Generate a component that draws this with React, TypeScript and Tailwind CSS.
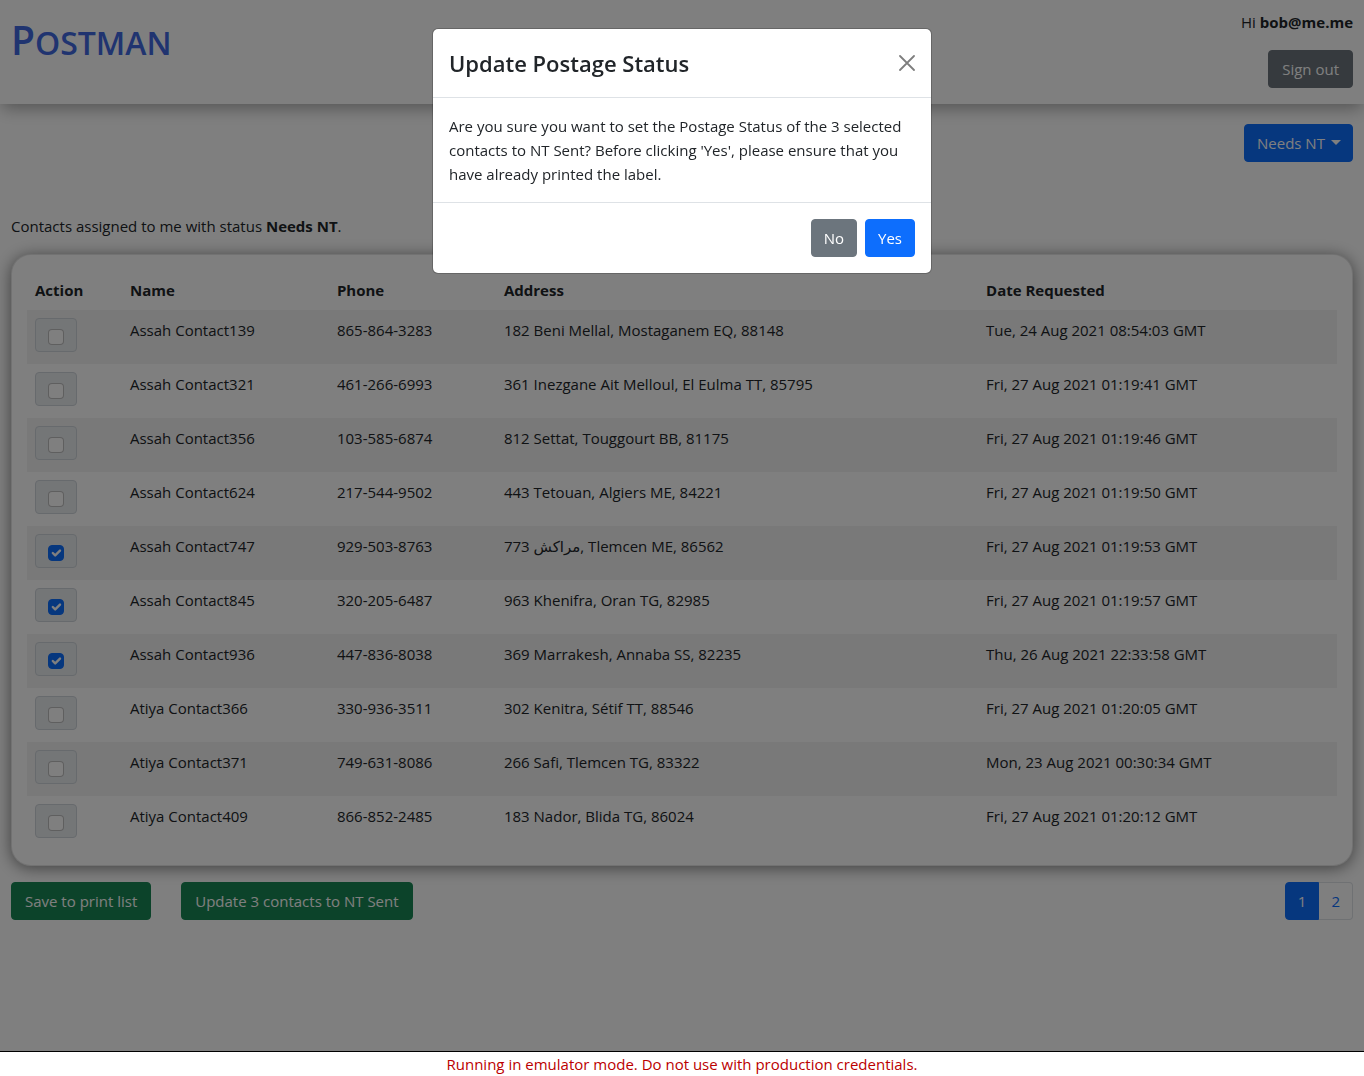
import { useState } from 'react';

type Contact = {
  name: string;
  phone: string;
  address: string;
  requested: string;
  selected?: boolean;
};

const initialContacts: Contact[] = [
  { name: 'Assah Contact139', phone: '865-864-3283', address: '182 Beni Mellal, Mostaganem EQ, 88148', requested: 'Tue, 24 Aug 2021 08:54:03 GMT' },
  { name: 'Assah Contact321', phone: '461-266-6993', address: '361 Inezgane Ait Melloul, El Eulma TT, 85795', requested: 'Fri, 27 Aug 2021 01:19:41 GMT' },
  { name: 'Assah Contact356', phone: '103-585-6874', address: '812 Settat, Touggourt BB, 81175', requested: 'Fri, 27 Aug 2021 01:19:46 GMT' },
  { name: 'Assah Contact624', phone: '217-544-9502', address: '443 Tetouan, Algiers ME, 84221', requested: 'Fri, 27 Aug 2021 01:19:50 GMT' },
  { name: 'Assah Contact747', phone: '929-503-8763', address: '773 مراكش, Tlemcen ME, 86562', requested: 'Fri, 27 Aug 2021 01:19:53 GMT', selected: true },
  { name: 'Assah Contact845', phone: '320-205-6487', address: '963 Khenifra, Oran TG, 82985', requested: 'Fri, 27 Aug 2021 01:19:57 GMT', selected: true },
  { name: 'Assah Contact936', phone: '447-836-8038', address: '369 Marrakesh, Annaba SS, 82235', requested: 'Thu, 26 Aug 2021 22:33:58 GMT', selected: true },
  { name: 'Atiya Contact366', phone: '330-936-3511', address: '302 Kenitra, Sétif TT, 88546', requested: 'Fri, 27 Aug 2021 01:20:05 GMT' },
  { name: 'Atiya Contact371', phone: '749-631-8086', address: '266 Safi, Tlemcen TG, 83322', requested: 'Mon, 23 Aug 2021 00:30:34 GMT' },
  { name: 'Atiya Contact409', phone: '866-852-2485', address: '183 Nador, Blida TG, 86024', requested: 'Fri, 27 Aug 2021 01:20:12 GMT' },
];

function Header() {
  return (
    <header className="flex items-start justify-between bg-white px-[11px] pt-2.5 pb-4 shadow-[0_6px_16px_-2px_rgba(0,0,0,0.35)]">
      <h1 className="pt-1.5 text-[39px] leading-[48px] font-semibold text-[#4169e1]">
        P<span className="text-[32px] uppercase">ostman</span>
      </h1>
      <div className="flex flex-col items-end gap-4">
        <p>
          Hi <strong className="font-bold">bob@me.me</strong>
        </p>
        <button type="button" className="rounded border border-[#6c757d] bg-[#6c757d] px-[13px] py-1.5 text-white">
          Sign out
        </button>
      </div>
    </header>
  );
}

function StatusFilter() {
  return (
    <div className="relative">
      <select
        aria-label="Status"
        className="h-[38px] w-[109px] appearance-none rounded border border-[#0d6efd] bg-[#0d6efd] pl-3 text-white"
      >
        <option>Needs NT</option>
      </select>
      <svg aria-hidden="true" viewBox="0 0 10 5" className="pointer-events-none absolute top-4 right-3 h-[5px] w-[10px] fill-white">
        <path d="M0 0H10L5 5Z" />
      </svg>
    </div>
  );
}

function ContactRow({ contact }: { contact: Contact }) {
  const [checked, setChecked] = useState(!!contact.selected);
  return (
    <tr className="align-top odd:bg-black/5">
      <td className="h-[54px] p-2">
        <label className="flex h-[34px] w-[42px] items-start justify-center rounded border border-[#ced4da] bg-[#e9ecef] pt-2.5">
          <span className="relative block size-4">
            <input
              type="checkbox"
              aria-label={`Select ${contact.name}`}
              checked={checked}
              onChange={(e) => setChecked(e.target.checked)}
              className="peer block size-4 appearance-none rounded border border-black/25 bg-white checked:border-[#0d6efd] checked:bg-[#0d6efd]"
            />
            <svg aria-hidden="true" viewBox="0 0 20 20" className="pointer-events-none absolute inset-0 hidden size-4 peer-checked:block">
              <path d="M6 10l3 3l6-6" fill="none" stroke="#fff" strokeWidth="3" strokeLinecap="round" strokeLinejoin="round" />
            </svg>
          </span>
        </label>
      </td>
      <td className="p-2">{contact.name}</td>
      <td className="p-2">{contact.phone}</td>
      <td className="p-2">{contact.address}</td>
      <td className="p-2">{contact.requested}</td>
    </tr>
  );
}

function ContactTable() {
  return (
    <section className="rounded-[20px] border border-black/10 bg-white p-[15px] shadow-[0_2px_16px_rgba(0,0,0,0.5)]">
      <table className="w-full table-fixed border-collapse text-left">
        <thead>
          <tr>
            <th className="w-[7.25%] p-2 font-bold">Action</th>
            <th className="w-[15.8%] p-2 font-bold">Name</th>
            <th className="w-[12.75%] p-2 font-bold">Phone</th>
            <th className="w-[36.8%] p-2 font-bold">Address</th>
            <th className="p-2 font-bold">Date Requested</th>
          </tr>
        </thead>
        <tbody>
          {initialContacts.map((contact) => (
            <ContactRow key={contact.name} contact={contact} />
          ))}
        </tbody>
      </table>
    </section>
  );
}

function TableActions() {
  return (
    <div className="mt-4 flex items-center justify-between">
      <div className="flex gap-[30px]">
        <button type="button" className="rounded border border-[#198754] bg-[#198754] px-[13px] py-1.5 text-white">
          Save to print list
        </button>
        <button type="button" className="rounded border border-[#198754] bg-[#198754] px-[13px] py-1.5 text-white">
          Update 3 contacts to NT Sent
        </button>
      </div>
      <nav aria-label="Pages" className="flex">
        <a href="#page-1" aria-current="page" className="rounded-l border border-[#0d6efd] bg-[#0d6efd] px-3 py-1.5 text-white">
          1
        </a>
        <a href="#page-2" className="rounded-r border border-l-0 border-[#dee2e6] bg-white px-3 py-1.5 text-[#0d6efd]">
          2
        </a>
      </nav>
    </div>
  );
}

function ConfirmDialog() {
  return (
    <div className="fixed inset-0 z-10 flex items-start justify-center bg-black/50 px-4 pt-7">
      <div
        role="dialog"
        aria-modal="true"
        aria-labelledby="dialog-title"
        className="w-full max-w-[500px] rounded-md border border-black/20 bg-white bg-clip-padding"
      >
        <div className="flex items-center justify-between border-b border-[#dee2e6] p-4">
          <h2 id="dialog-title" className="text-[22px] leading-9 font-semibold">
            Update Postage Status
          </h2>
          <button type="button" aria-label="Close" className="opacity-50">
            <svg aria-hidden="true" viewBox="0 0 16 16" className="size-4">
              <path d="M1 1L15 15M15 1L1 15" stroke="#000" strokeWidth="1.8" strokeLinecap="round" />
            </svg>
          </button>
        </div>
        <p className="p-4">
          Are you sure you want to set the Postage Status of the 3 selected contacts to NT Sent? Before clicking 'Yes', please
          ensure that you have already printed the label.
        </p>
        <div className="flex justify-end gap-2 border-t border-[#dee2e6] p-4">
          <button type="button" className="rounded border border-[#6c757d] bg-[#6c757d] px-3 py-1.5 text-white">
            No
          </button>
          <button type="button" className="rounded border border-[#0d6efd] bg-[#0d6efd] px-3 py-1.5 text-white">
            Yes
          </button>
        </div>
      </div>
    </div>
  );
}

export default function App() {
  return (
    <div className="min-h-screen bg-white font-['Open_Sans','Noto_Sans','DejaVu_Sans',sans-serif] text-[15px] leading-6 text-[#212529]">
      <Header />
      <main className="px-[11px] pt-5 pb-8">
        <div className="flex justify-end">
          <StatusFilter />
        </div>
        <p className="mt-[52px] mb-4">
          Contacts assigned to me with status <strong className="font-bold">Needs NT</strong>.
        </p>
        <ContactTable />
        <TableActions />
      </main>
      <ConfirmDialog />
      <p className="fixed inset-x-0 bottom-0 z-20 border-t border-black bg-white text-center text-[#bb0000]">
        Running in emulator mode. Do not use with production credentials.
      </p>
    </div>
  );
}
